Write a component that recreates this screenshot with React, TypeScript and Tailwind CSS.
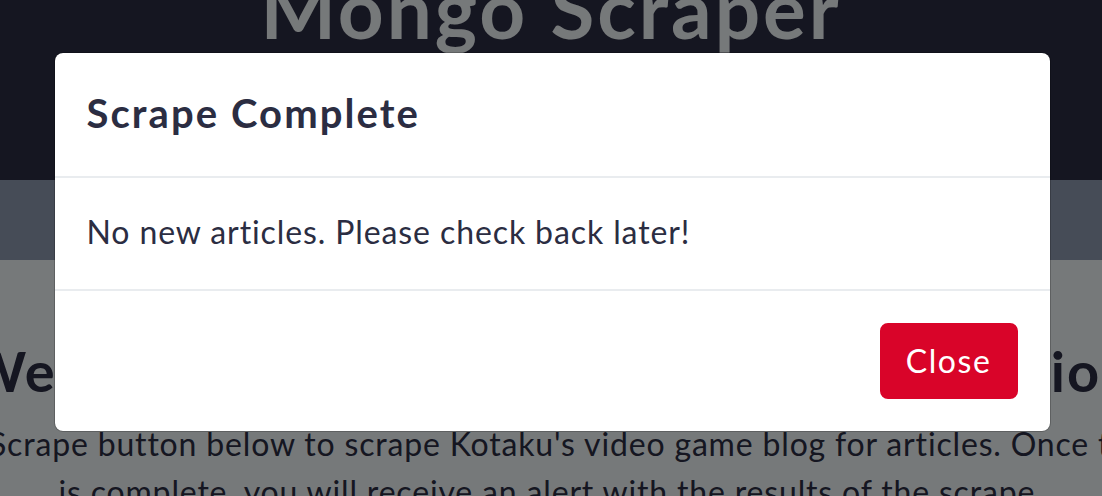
export default function App() {
  return (
    <div className="relative h-[496px] w-full overflow-hidden bg-[#edf2f4] font-['Lato','Open_Sans',sans-serif] text-[#2b2d42]">
      {/* page behind the modal */}
      <header className="flex h-[180px] flex-col items-center bg-[#2b2d42]">
        <h1 className="-mt-[40px] whitespace-nowrap text-[80px] font-bold leading-[96px] tracking-[0.037em] text-[#edf2f4]">Mongo Scraper</h1>
      </header>
      <nav className="h-[80px] bg-[#8d99ae]" />
      <main className="flex flex-col items-center pt-[77px] text-center">
        <h2 className="mb-4 whitespace-nowrap text-[56px] font-bold leading-[67px] tracking-[0.034em]">Welcome to Mongo Scraper: Kotaku Edition</h2>
        <p className="whitespace-nowrap text-[32px] leading-[48px] tracking-[0.026em]">
          Click the Scrape button below to scrape Kotaku's video game blog for articles. Once the scrape
          <br />
          is complete, you will receive an alert with the results of the scrape.
        </p>
      </main>

      {/* backdrop + modal */}
      <div className="absolute inset-0 flex justify-center bg-black/50 pl-[2px] pt-[52px]">
        <div className="h-fit w-[997px] rounded-[9px] border border-black/20 bg-white bg-clip-padding">
          <div className="border-b-2 border-[#e9ecef] px-8 pb-[33px] pt-[30px]">
            <h5 className="text-[40px] font-bold leading-[60px] tracking-[0.052em]">Scrape Complete</h5>
          </div>
          <div className="px-8 pb-[33px] pt-[30px]">
            <p className="text-[32px] leading-[48px] tracking-[0.028em]">No new articles. Please check back later!</p>
          </div>
          <div className="flex justify-end border-t-2 border-[#e9ecef] p-8">
            <button className="rounded-[8px] border-2 border-[#d90429] bg-[#d90429] px-6 py-3 text-[32px] leading-[48px] tracking-[0.05em] text-white">
              Close
            </button>
          </div>
        </div>
      </div>
    </div>
  );
}
